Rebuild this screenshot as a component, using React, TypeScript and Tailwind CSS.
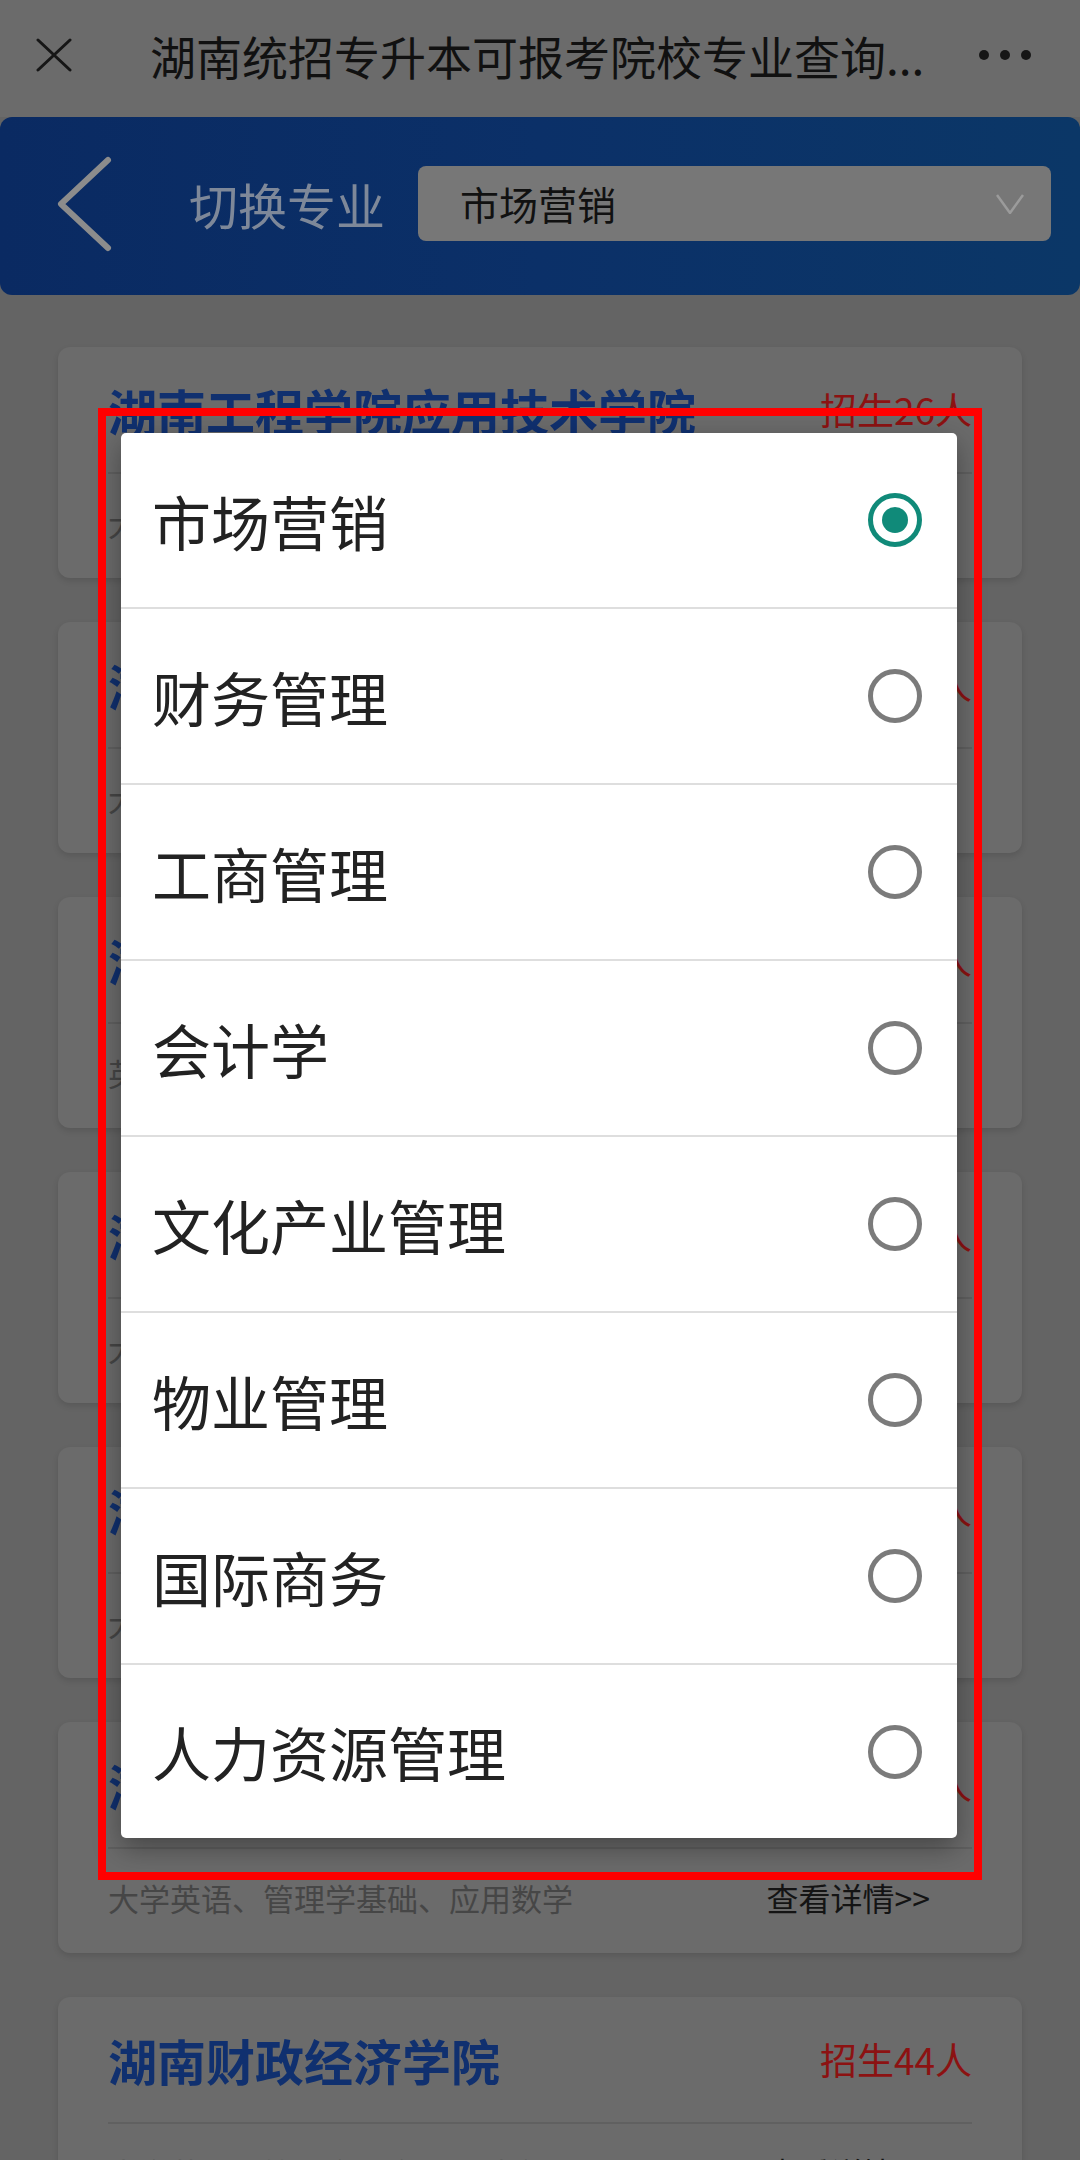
import { useState } from 'react'

const majors = [
  '市场营销',
  '财务管理',
  '工商管理',
  '会计学',
  '文化产业管理',
  '物业管理',
  '国际商务',
  '人力资源管理',
]

const schools = [
  { name: '湖南工程学院应用技术学院', count: 26, subjects: '大学英语、管理学基础、应用数学' },
  { name: '湖南工商大学北津学院', count: 30, subjects: '大学英语、管理学、市场营销学' },
  { name: '湖南涉外经济学院', count: 40, subjects: '英语、管理学基础、市场营销' },
  { name: '湖南人文科技学院', count: 20, subjects: '大学英语、管理学、经济学基础' },
  { name: '湖南应用技术学院', count: 35, subjects: '大学英语、管理学基础、应用数学' },
  { name: '湖南信息学院', count: 50, subjects: '大学英语、管理学基础、应用数学' },
  { name: '湖南财政经济学院', count: 44, subjects: '大学英语、管理学、市场营销学' },
]

const Radio = ({ checked }: { checked: boolean }) => (
  <span
    className={`flex h-[54px] w-[54px] items-center justify-center rounded-full border-[5px] ${
      checked ? 'border-[#108a79]' : 'border-[#7b7b7b]'
    }`}
  >
    {checked && <span className="h-[26px] w-[26px] rounded-full bg-[#108a79]"></span>}
  </span>
)

const App = () => {
  const [major, setMajor] = useState('市场营销')

  return (
    <div className="relative min-h-[2160px] w-[1080px] overflow-hidden bg-[#646464] font-['Noto_Sans_CJK_SC',sans-serif]">
      {/* top bar */}
      <div className="flex h-[117px] items-center bg-[#6b6b6b] pb-[8px] pl-[36px] pr-[49px]">
        <svg width="36" height="34" viewBox="0 0 36 34" className="shrink-0">
          <path d="M2 2 L34 32 M34 2 L2 32" stroke="#161616" strokeWidth="3" strokeLinecap="round" />
        </svg>
        <div className="ml-[78px] whitespace-nowrap text-[46px] leading-none text-[#111]">
          湖南统招专升本可报考院校专业查询...
        </div>
        <div className="ml-auto flex gap-[11px]">
          <span className="h-[10px] w-[10px] rounded-full bg-[#161616]"></span>
          <span className="h-[10px] w-[10px] rounded-full bg-[#161616]"></span>
          <span className="h-[10px] w-[10px] rounded-full bg-[#161616]"></span>
        </div>
      </div>

      {/* header */}
      <div className="flex h-[178px] items-center rounded-[12px] bg-gradient-to-r from-[#0a2a62] via-[#0b3068] to-[#0b3767] pb-[5px] pl-[56px] pr-[29px]">
        <svg width="58" height="100" viewBox="0 0 58 100" className="shrink-0">
          <polyline
            points="52,6 5,50 52,94"
            fill="none"
            stroke="#8c8c8c"
            strokeWidth="6"
            strokeLinecap="round"
            strokeLinejoin="round"
          />
        </svg>
        <div className="ml-[75px] whitespace-nowrap text-[49px] leading-none text-[#7e8899]">切换专业</div>
        <div className="ml-[33px] flex h-[75px] flex-1 items-center justify-between rounded-[8px] bg-[#777777] pl-[42px] pr-[27px]">
          <span className="text-[39px] leading-none text-[#111]">{major}</span>
          <svg width="28" height="20" viewBox="0 0 28 20">
            <polyline points="1,1 14,19 27,1" fill="none" stroke="#9b9b9b" strokeWidth="2.5" />
          </svg>
        </div>
      </div>

      {/* school list */}
      <div className="flex flex-col gap-[44px] px-[58px] pt-[52px]">
        {schools.map((s) => (
          <div
            key={s.name}
            className="flex h-[231px] flex-col rounded-[12px] bg-[#6b6b6b] px-[50px] shadow-[0_3px_6px_rgba(0,0,0,0.12)]"
          >
            <div className="flex h-[125px] shrink-0 items-center justify-between">
              <span className="text-[49px] font-bold leading-none text-[#10306f]">{s.name}</span>
              <span className="text-[37px] leading-none text-[#8c1212]">招生{s.count}人</span>
            </div>
            <div className="h-[2px] bg-[#606060]"></div>
            <div className="flex h-[104px] items-center justify-between pb-[8px]">
              <span className="text-[31px] leading-none text-[#464646]">{s.subjects}</span>
              <span className="mr-[42px] text-[32px] leading-none text-[#141414]">查看详情&gt;&gt;</span>
            </div>
          </div>
        ))}
      </div>

      {/* picker dialog */}
      <div className="absolute left-[121px] top-[433px] w-[836px] overflow-hidden rounded-[5px] bg-white shadow-[0_10px_28px_rgba(0,0,0,0.35)]">
        {majors.map((m, i) => (
          <div
            key={m}
            onClick={() => setMajor(m)}
            className={`flex items-center justify-between pl-[31px] pr-[35px] ${
              i < majors.length - 1 ? 'h-[176px] border-b-2 border-[#dedede]' : 'h-[173px]'
            }`}
          >
            <span className="text-[59px] leading-none text-[#222]">{m}</span>
            <Radio checked={m === major} />
          </div>
        ))}
      </div>

      {/* red highlight frame */}
      <div className="pointer-events-none absolute left-[98px] top-[408px] h-[1472px] w-[884px] border-[8px] border-[#ff0000]"></div>
    </div>
  )
}

export default App
